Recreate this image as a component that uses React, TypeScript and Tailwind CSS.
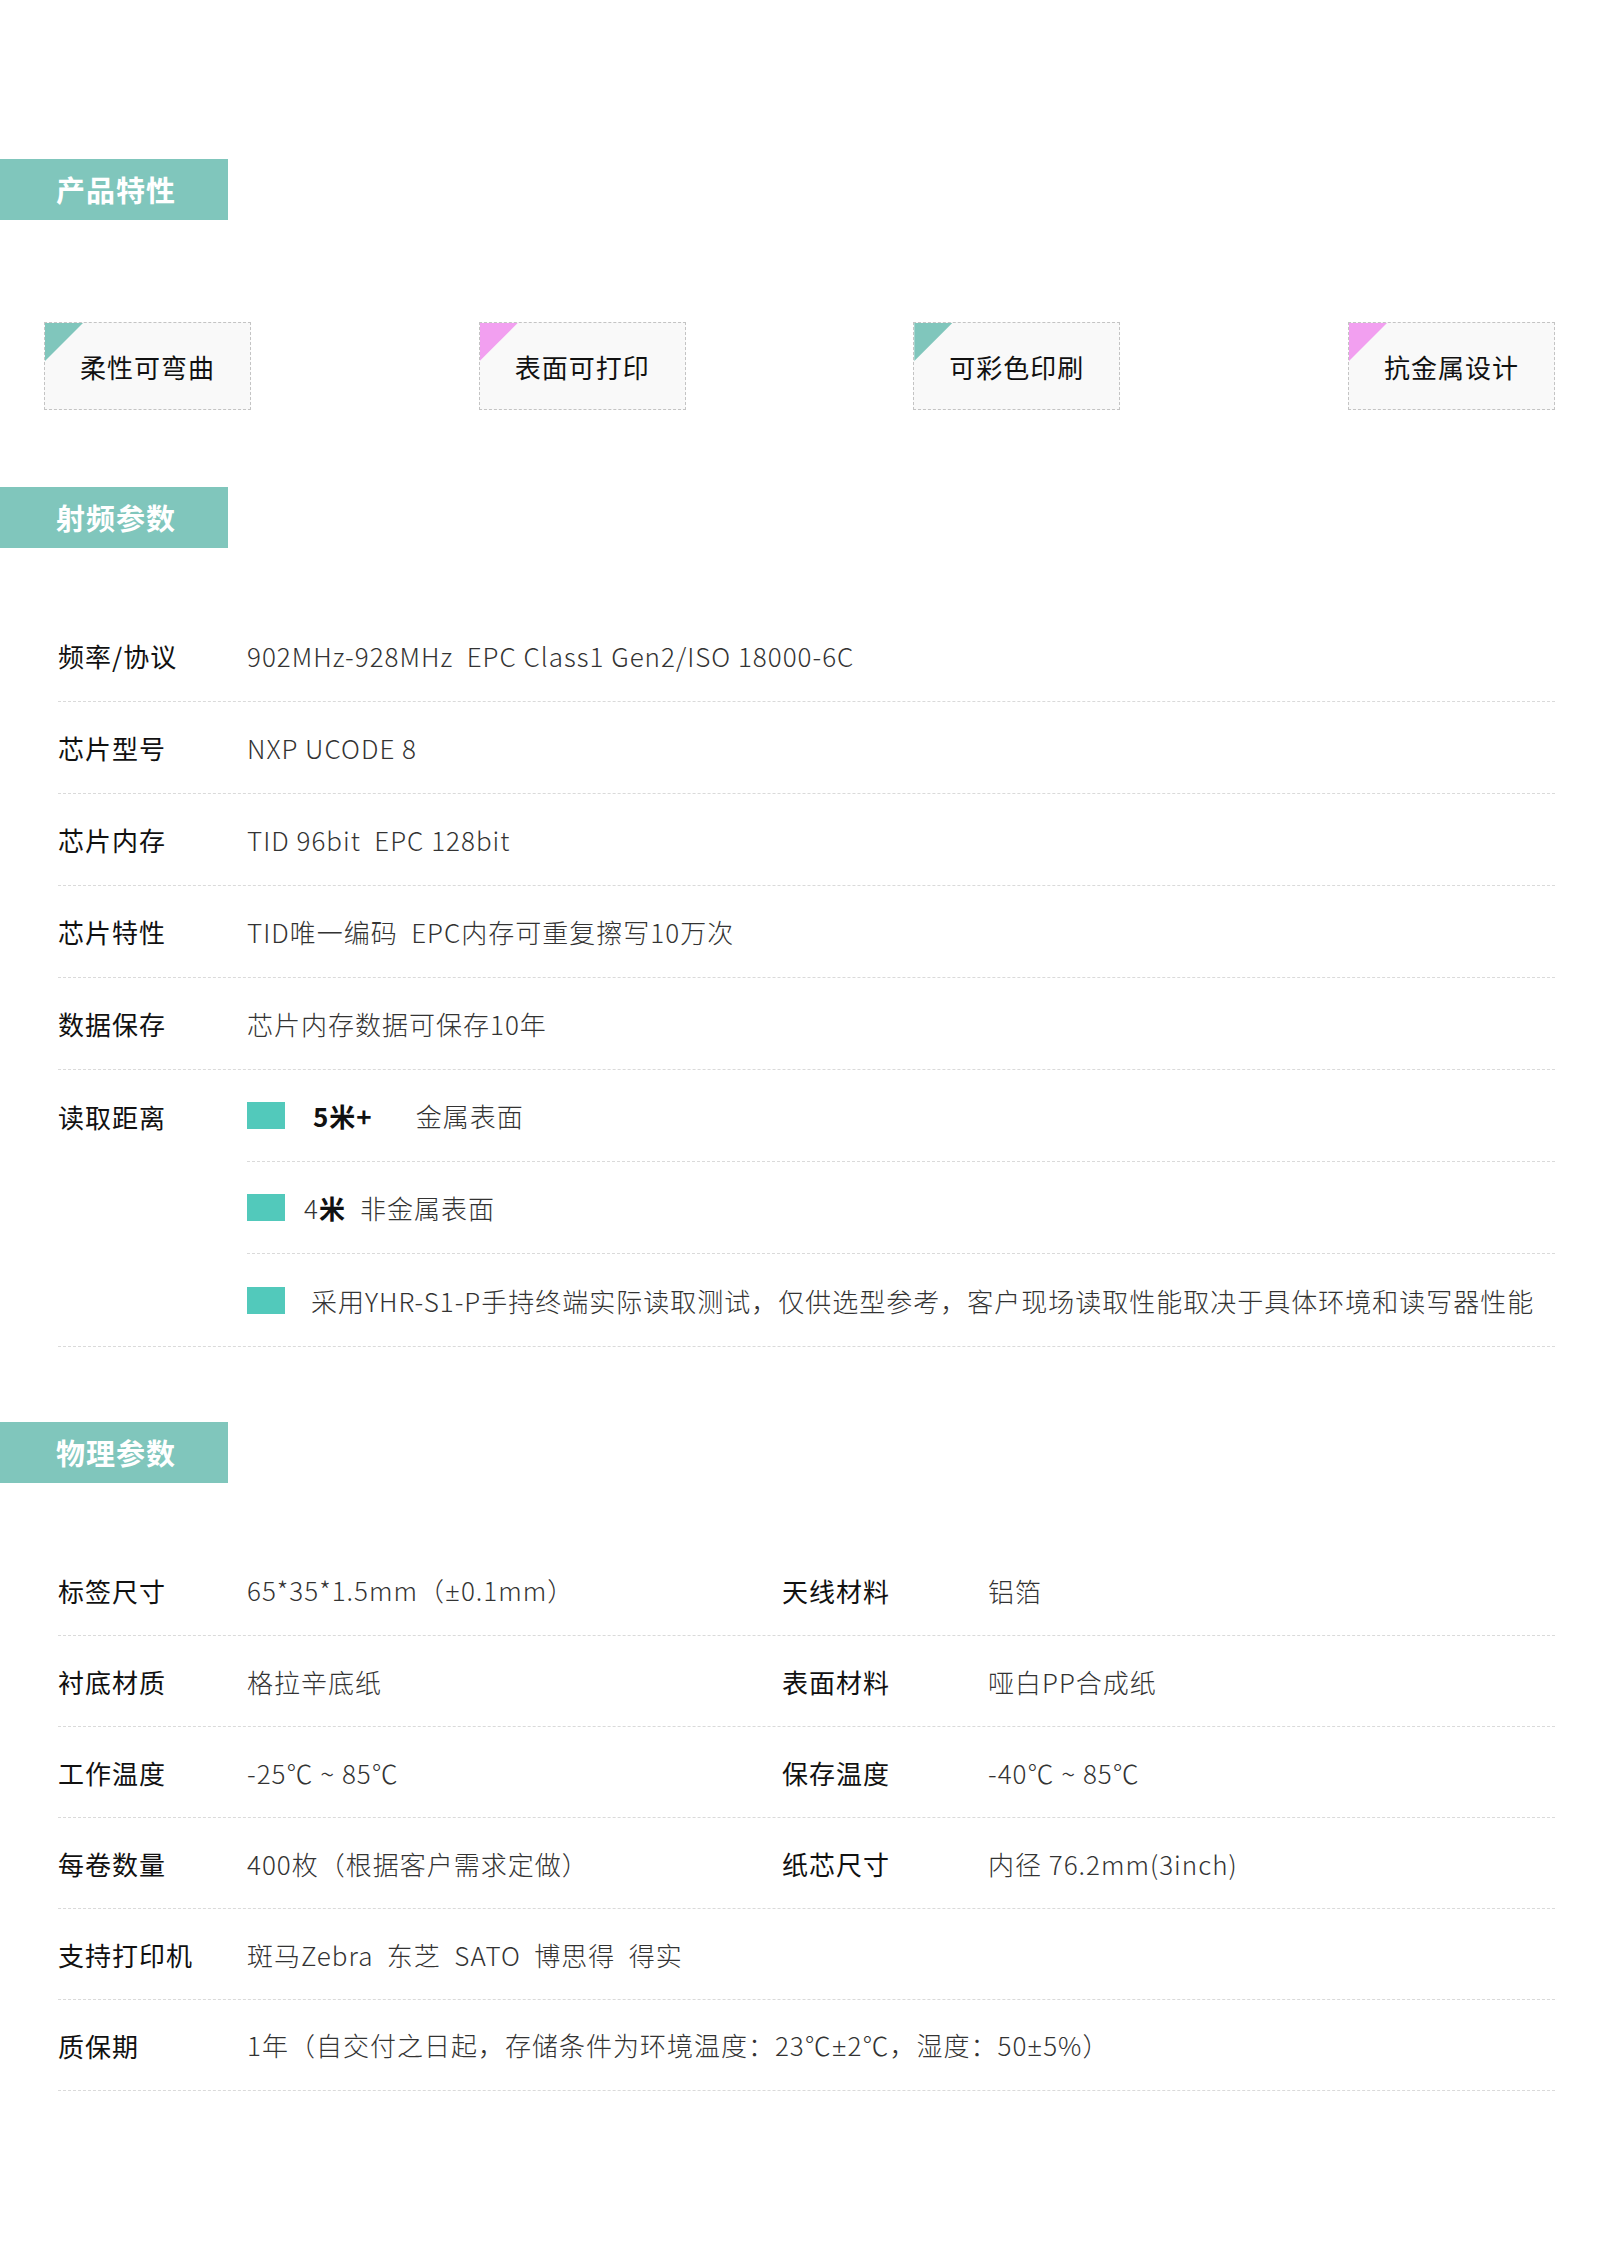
import React from "react";

const FONT = { fontFamily: '"Noto Sans CJK SC", "Noto Sans", sans-serif' };

function PM() {
  return <span style={{ fontFamily: '"Noto Sans", sans-serif' }}>±</span>;
}

function Header({ title }: { title: string }) {
  return (
    <div className="flex h-[61px] w-[228px] items-center justify-center bg-[#80c6bc] pl-[4px] text-[29px] font-bold leading-none tracking-[1px] text-white">
      {title}
    </div>
  );
}

function Feature({ text, color }: { text: string; color: string }) {
  return (
    <div className="relative flex h-[88px] w-[207px] items-center justify-center border border-dashed border-[#c4c4c4] bg-[#f9f9f9]">
      <div
        className={`absolute left-0 top-0 h-[38px] w-[38px] [clip-path:polygon(0_0,100%_0,0_100%)] ${color}`}
      />
      <span className="pt-[2px] text-[26px] leading-none tracking-[1px] text-[#111]">{text}</span>
    </div>
  );
}

function Row({ label, value }: { label: string; value: React.ReactNode }) {
  return (
    <div className="flex h-[92px] items-center border-b border-dashed border-[#dadada]">
      <div className="w-[189px] text-[26px] tracking-[1px] text-[#111]">{label}</div>
      <div className="whitespace-pre text-[26px] font-light tracking-[1px] text-[#333]">{value}</div>
    </div>
  );
}

function Row2({
  l1,
  v1,
  l2,
  v2,
}: {
  l1: string;
  v1: React.ReactNode;
  l2?: string;
  v2?: string;
}) {
  return (
    <div className="flex h-[91px] items-center border-b border-dashed border-[#dadada]">
      <div className="w-[189px] text-[26px] tracking-[1px] text-[#111]">{l1}</div>
      <div className="w-[535px] whitespace-pre text-[26px] font-light tracking-[1px] text-[#333]">{v1}</div>
      {l2 && <div className="w-[206px] text-[26px] tracking-[1px] text-[#111]">{l2}</div>}
      {v2 && <div className="whitespace-pre text-[26px] font-light tracking-[1px] text-[#333]">{v2}</div>}
    </div>
  );
}

function Square() {
  return <div className="h-[27px] w-[38px] shrink-0 bg-[#52c9bb]" />;
}

export default function App() {
  return (
    <div className="h-[2262px] w-[1600px] bg-white pt-[159px]" style={FONT}>
      <Header title="产品特性" />

      <div className="ml-[44px] mt-[102px] flex w-[1511px] justify-between">
        <Feature text="柔性可弯曲" color="bg-[#80c6bc]" />
        <Feature text="表面可打印" color="bg-[#f29ff0]" />
        <Feature text="可彩色印刷" color="bg-[#80c6bc]" />
        <Feature text="抗金属设计" color="bg-[#f29ff0]" />
      </div>

      <div className="mt-[77px]">
        <Header title="射频参数" />
      </div>

      <div className="ml-[58px] mt-[62px] w-[1497px]">
        <Row label="频率/协议" value="902MHz-928MHz  EPC Class1 Gen2/ISO 18000-6C" />
        <Row label="芯片型号" value="NXP UCODE 8" />
        <Row label="芯片内存" value="TID 96bit  EPC 128bit" />
        <Row label="芯片特性" value="TID唯一编码  EPC内存可重复擦写10万次" />
        <Row label="数据保存" value="芯片内存数据可保存10年" />
        <div className="flex border-b border-dashed border-[#dadada]">
          <div className="flex h-[92px] w-[189px] items-center text-[26px] tracking-[1px] text-[#111]">读取距离</div>
          <div className="flex-1">
            <div className="flex h-[92px] items-center border-b border-dashed border-[#dadada] text-[26px] tracking-[1px]">
              <Square />
              <span className="ml-[28px] font-bold text-[#111]">5米+</span>
              <span className="ml-[43px] font-light text-[#333]">金属表面</span>
            </div>
            <div className="flex h-[92px] items-center border-b border-dashed border-[#dadada] text-[26px] tracking-[1px]">
              <Square />
              <span className="ml-[19px] font-light text-[#333]">4</span>
              <span className="font-bold text-[#111]">米</span>
              <span className="ml-[14px] font-light text-[#333]">非金属表面</span>
            </div>
            <div className="flex h-[92px] items-center text-[26px] tracking-[1px]">
              <Square />
              <span className="ml-[26px] whitespace-nowrap font-light text-[#333]">
                采用YHR-S1-P手持终端实际读取测试，仅供选型参考，客户现场读取性能取决于具体环境和读写器性能
              </span>
            </div>
          </div>
        </div>
      </div>

      <div className="mt-[75px]">
        <Header title="物理参数" />
      </div>

      <div className="ml-[58px] mt-[62px] w-[1497px]">
        <Row2
          l1="标签尺寸"
          v1={
            <>
              65*35*1.5mm（<PM />0.1mm）
            </>
          }
          l2="天线材料"
          v2="铝箔"
        />
        <Row2 l1="衬底材质" v1="格拉辛底纸" l2="表面材料" v2="哑白PP合成纸" />
        <Row2 l1="工作温度" v1="-25℃ ~ 85℃" l2="保存温度" v2="-40℃ ~ 85℃" />
        <Row2 l1="每卷数量" v1="400枚（根据客户需求定做）" l2="纸芯尺寸" v2="内径 76.2mm(3inch)" />
        <Row2 l1="支持打印机" v1="斑马Zebra  东芝  SATO  博思得  得实" />
        <div className="flex h-[91px] items-center border-b border-dashed border-[#dadada]">
          <div className="w-[189px] text-[26px] tracking-[1px] text-[#111]">质保期</div>
          <div className="whitespace-nowrap text-[26px] font-light tracking-[1px] text-[#333]">
            1年（自交付之日起，存储条件为环境温度：23℃<PM />2℃，湿度：50<PM />5%）
          </div>
        </div>
      </div>
    </div>
  );
}
